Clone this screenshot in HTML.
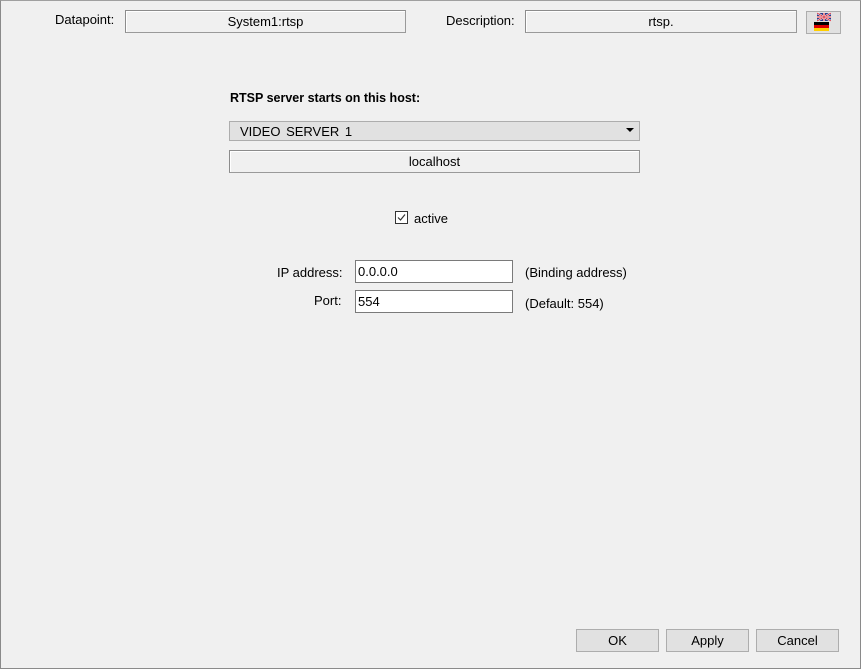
<!DOCTYPE html>
<html><head><meta charset="utf-8"><style>
*{margin:0;padding:0;box-sizing:border-box}
html,body{width:861px;height:669px;overflow:hidden;background:#f0f0f0;font-family:"Liberation Sans",sans-serif;font-size:13px;color:#000}
#frame{position:absolute;left:0;top:0;width:861px;height:669px;border:1px solid #8a8a8a;border-top-color:#a0a0a0}
.a{position:absolute;white-space:nowrap}
.box{position:absolute;border:1px solid #8c8c8c;border-right-color:#9a9a9a;border-bottom-color:#9a9a9a;background:#f0f0f0;text-align:center;box-shadow:inset 1px 1px 0 #fff}
.inp{position:absolute;border:1px solid #7a7a7a;background:#fff;padding-left:2px}
.btn{position:absolute;background:#e1e1e1;border:1px solid #adadad;text-align:center;font-size:13px}
</style></head><body>
<div id="frame"></div>
<div class="a" style="left:55px;top:12px">Datapoint:</div>
<div class="box" style="left:125px;top:10px;width:281px;height:23px;line-height:21px">System1:rtsp</div>
<div class="a" style="left:446px;top:13px">Description:</div>
<div class="box" style="left:525px;top:10px;width:272px;height:23px;line-height:21px">rtsp.</div>
<div style="position:absolute;left:806px;top:11px;width:35px;height:23px;background:#e1e1e1;border:1px solid #adadad">
<svg width="35" height="23" style="position:absolute;left:-1px;top:-1px">
<rect x="11" y="2" width="14" height="8" fill="#2a3a8a"/>
<path d="M11 2L25 10M25 2L11 10" stroke="#fff" stroke-width="2"/>
<path d="M11 2L25 10M25 2L11 10" stroke="#d02030" stroke-width="0.8"/>
<rect x="11" y="5" width="14" height="2" fill="#fff"/><rect x="17" y="2" width="2" height="8" fill="#fff"/>
<rect x="11" y="5.5" width="14" height="1" fill="#d02030"/><rect x="17.5" y="2" width="1" height="8" fill="#d02030"/>
<rect x="8" y="11" width="15" height="3" fill="#000"/><rect x="8" y="14" width="15" height="3" fill="#dd0000"/><rect x="8" y="17" width="15" height="3" fill="#ffce00"/>
</svg></div>
<div class="a" style="left:230px;top:91px;font-weight:bold;font-size:12.5px">RTSP server starts on this host:</div>
<div style="position:absolute;left:229px;top:121px;width:411px;height:20px;background:#e1e1e1;border:1px solid #adadad">
<span class="a" style="left:10px;top:2px;font-size:13px;word-spacing:2px">VIDEO SERVER 1</span>
<svg class="a" style="left:396px;top:6px" width="8" height="5"><path d="M0 0H8L4 4Z" fill="#000"/></svg></div>
<div class="box" style="left:229px;top:150px;width:411px;height:23px;line-height:21px;font-size:13px">localhost</div>
<div style="position:absolute;left:395px;top:211px;width:13px;height:13px;border:1px solid #333;background:#fff">
<svg width="11" height="11" style="position:absolute;left:0;top:0"><path d="M2 5.5L4.5 8L9 2.5" stroke="#333" stroke-width="1.2" fill="none"/></svg></div>
<div class="a" style="left:414px;top:211px;font-size:13px">active</div>
<div class="a" style="left:277px;top:265px;font-size:13px">IP address:</div>
<div class="inp" style="left:355px;top:260px;width:158px;height:23px;line-height:21px">0.0.0.0</div>
<div class="a" style="left:525px;top:265px;font-size:13px">(Binding address)</div>
<div class="a" style="left:314px;top:293px;font-size:13px">Port:</div>
<div class="inp" style="left:355px;top:290px;width:158px;height:23px;line-height:21px">554</div>
<div class="a" style="left:525px;top:296px;font-size:13px">(Default: 554)</div>
<div class="btn" style="left:576px;top:629px;width:83px;height:23px;line-height:21px">OK</div>
<div class="btn" style="left:666px;top:629px;width:83px;height:23px;line-height:21px">Apply</div>
<div class="btn" style="left:756px;top:629px;width:83px;height:23px;line-height:21px">Cancel</div>
</body></html>
